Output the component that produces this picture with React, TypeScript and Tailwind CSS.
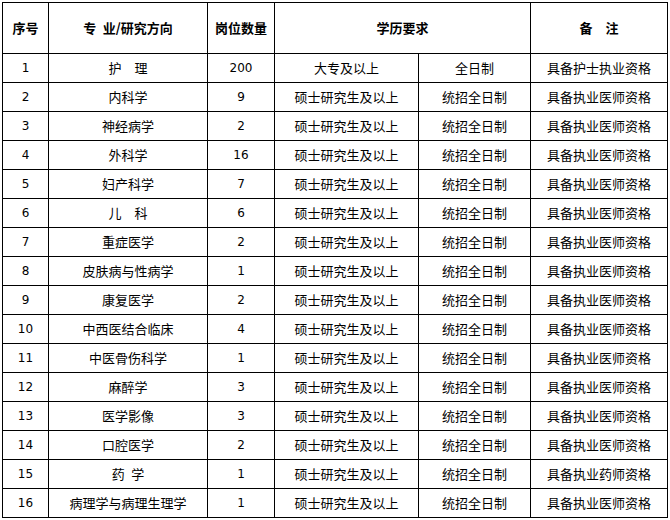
const rows: [string, string, string, string, string, string][] = [
  ["1", "护\u3000理", "200", "大专及以上", "全日制", "具备护士执业资格"],
  ["2", "内科学", "9", "硕士研究生及以上", "统招全日制", "具备执业医师资格"],
  ["3", "神经病学", "2", "硕士研究生及以上", "统招全日制", "具备执业医师资格"],
  ["4", "外科学", "16", "硕士研究生及以上", "统招全日制", "具备执业医师资格"],
  ["5", "妇产科学", "7", "硕士研究生及以上", "统招全日制", "具备执业医师资格"],
  ["6", "儿\u3000科", "6", "硕士研究生及以上", "统招全日制", "具备执业医师资格"],
  ["7", "重症医学", "2", "硕士研究生及以上", "统招全日制", "具备执业医师资格"],
  ["8", "皮肤病与性病学", "1", "硕士研究生及以上", "统招全日制", "具备执业医师资格"],
  ["9", "康复医学", "2", "硕士研究生及以上", "统招全日制", "具备执业医师资格"],
  ["10", "中西医结合临床", "4", "硕士研究生及以上", "统招全日制", "具备执业医师资格"],
  ["11", "中医骨伤科学", "1", "硕士研究生及以上", "统招全日制", "具备执业医师资格"],
  ["12", "麻醉学", "3", "硕士研究生及以上", "统招全日制", "具备执业医师资格"],
  ["13", "医学影像", "3", "硕士研究生及以上", "统招全日制", "具备执业医师资格"],
  ["14", "口腔医学", "2", "硕士研究生及以上", "统招全日制", "具备执业医师资格"],
  ["15", "药\u2002学", "1", "硕士研究生及以上", "统招全日制", "具备执业药师资格"],
  ["16", "病理学与病理生理学", "1", "硕士研究生及以上", "统招全日制", "具备执业医师资格"],
];

const cell = "bg-white flex items-center justify-center text-[13px] text-black whitespace-pre";
const head = "bg-white flex items-center justify-center text-[13px] font-bold text-black whitespace-pre";
const num = "font-['DejaVu_Sans',sans-serif] text-[12px]";

export default function App() {
  return (
    <div className="w-[670px] h-[520px] bg-white pl-[2px] pt-[2px] font-['Noto_Sans_CJK_SC','Noto_Sans',sans-serif]">
      <div className="grid w-[666px] grid-cols-[45px_158px_66px_143px_111px_136px] grid-rows-[50px] auto-rows-[28px] gap-px bg-black p-px">
        <div className={head}>序号</div>
        <div className={head}>专{"\u2002"}业/研究方向</div>
        <div className={head}>岗位数量</div>
        <div className={`${head} col-span-2`}>学历要求</div>
        <div className={head}>备{"\u3000"}注</div>
        {rows.map((r) => (
          <div key={r[0]} className="contents">
            <div className={cell}>
              <span className={num}>{r[0]}</span>
            </div>
            <div className={cell}>{r[1]}</div>
            <div className={cell}>
              <span className={num}>{r[2]}</span>
            </div>
            <div className={cell}>{r[3]}</div>
            <div className={cell}>{r[4]}</div>
            <div className={cell}>{r[5]}</div>
          </div>
        ))}
      </div>
    </div>
  );
}
